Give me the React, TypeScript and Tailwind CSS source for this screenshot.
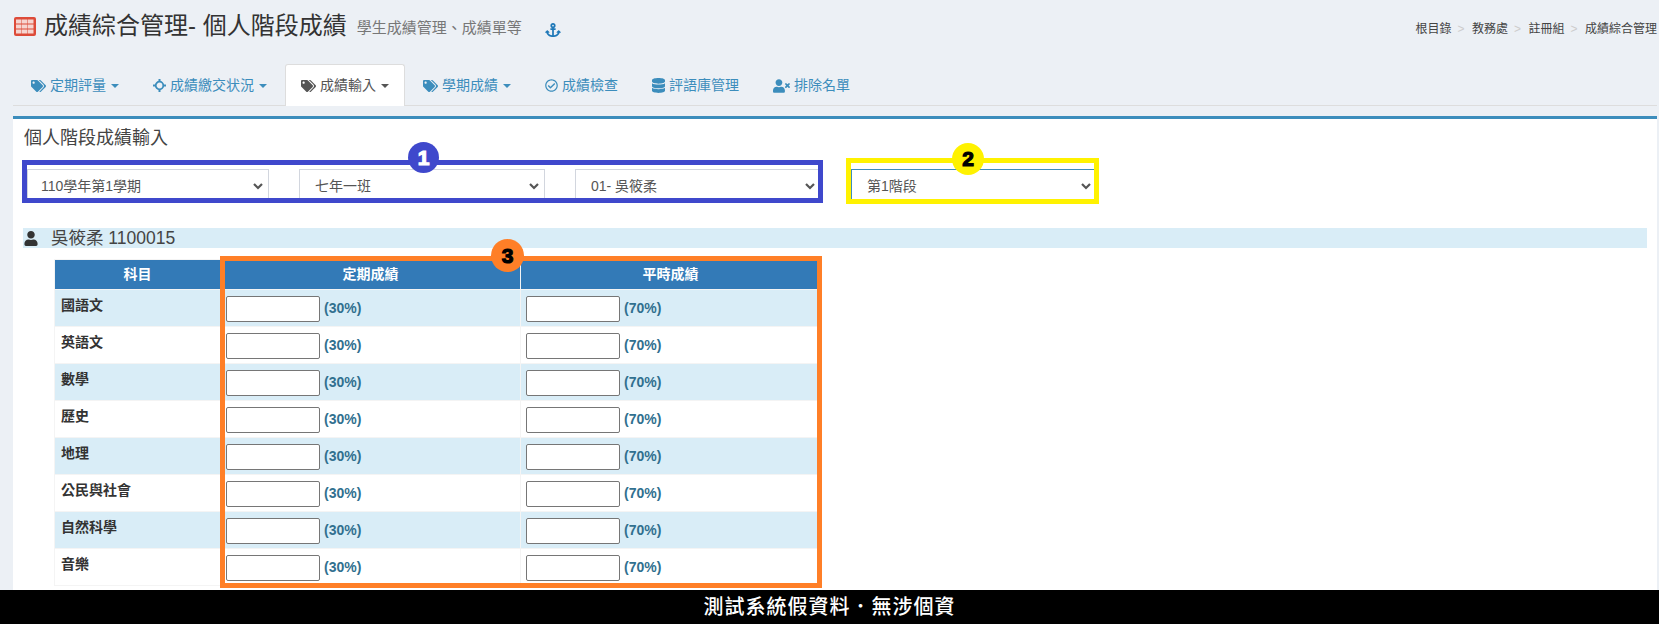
import React from "react";
import { FaTags, FaRegCheckCircle, FaDatabase, FaUserTimes, FaAnchor, FaUser } from "react-icons/fa";

const font = { fontFamily: '"Liberation Sans", "Noto Sans CJK TC", sans-serif' };

function Caret() {
  return <span className="ml-[1px] inline-block w-0 h-0 border-x-4 border-x-transparent border-t-4 border-t-current align-middle" />;
}

function TableIcon() {
  return (
    <svg viewBox="0 0 22 19" className="w-[22px] h-[19px] ml-[1px]">
      <rect x="0" y="0" width="22" height="19" rx="2" fill="#dd4b39" />
      {[2, 8, 14].map((x) =>
        [2.5, 7.5, 12.5].map((y) => <rect key={`${x}-${y}`} x={x} y={y} width="5.5" height="4" fill="#f6d5d0" />)
      )}
    </svg>
  );
}

function CrosshairIcon() {
  return (
    <svg viewBox="0 0 13 13" className="w-[13px] h-[13px]" fill="none" stroke="currentColor">
      <circle cx="6.5" cy="6.5" r="3.8" strokeWidth="1.8" />
      <path d="M6.5 0v3M6.5 10v3M0 6.5h3M10 6.5h3" strokeWidth="2" />
    </svg>
  );
}

const tabs = [
  { label: "定期評量", icon: <FaTags className="w-[15px] h-[14px]" />, caret: true },
  { label: "成績繳交状況", icon: <CrosshairIcon />, caret: true },
  { label: "成績輸入", icon: <FaTags className="w-[15px] h-[14px]" />, caret: true, active: true },
  { label: "學期成績", icon: <FaTags className="w-[15px] h-[14px]" />, caret: true },
  { label: "成績檢查", icon: <FaRegCheckCircle className="w-[13px] h-[13px]" /> },
  { label: "評語庫管理", icon: <FaDatabase className="w-[13px] h-[15px]" /> },
  { label: "排除名單", icon: <FaUserTimes className="w-[17px] h-[14px]" /> },
];

const subjects = ["國語文", "英語文", "數學", "歷史", "地理", "公民與社會", "自然科學", "音樂"];

function Score({ pct }: { pct: string }) {
  return (
    <td className="border border-[#f4f4f4] pl-[5px] pt-[1px] align-middle">
      <div className="flex items-center gap-[4px]">
        <input className="w-[94px] h-[26px] bg-white border border-[#767676] rounded-[2px]" />
        <b className="text-[14px] text-[#31708f]">({pct})</b>
      </div>
    </td>
  );
}

function Picker({ value, className, focus, first }: { value: string; className: string; focus?: boolean; first?: boolean }) {
  return (
    <div className={`relative h-[34px] ${className}`}>
      <select
        defaultValue={value}
        className={`w-full h-full appearance-none bg-white border rounded-none pr-1 text-[14px] text-[#555] ${first ? "pl-[13px]" : "pl-[15px]"} ${
          focus ? "border-[#3c8dbc]" : "border-[#d2d6de]"
        }`}
      >
        <option>{value}</option>
      </select>
      <svg viewBox="0 0 10 7" className="absolute right-[6px] top-[14px] w-[10px] h-[7px] pointer-events-none" fill="none" stroke="#555" strokeWidth="2.2">
        <path d="M1 1l4 4 4-4" />
      </svg>
    </div>
  );
}

const stroke = "[-webkit-text-stroke:1.2px_currentColor]";

export default function App() {
  return (
    <div className="relative w-[1659px] h-[624px] overflow-hidden bg-[#ecf0f5] flex flex-col" style={font}>
      <div className="h-[590px] flex flex-col pl-[13px] pr-[2px] overflow-hidden">
        <div className="h-[64px] shrink-0 flex items-start justify-between">
          <div className="flex items-center h-[52px]">
            <TableIcon />
            <h1 className="ml-[8px] text-[24px] leading-[30px] text-[#333] whitespace-nowrap">成績綜合管理- 個人階段成績</h1>
            <span className="ml-[10px] mt-[4px] text-[15px] text-[#777] whitespace-nowrap">學生成績管理、成績單等</span>
            <FaAnchor className="ml-[23px] mt-[8px] w-[16px] h-[14px] text-[#1f78b8]" />
          </div>
          <div className="flex items-center h-[58px] text-[12px] text-[#444] whitespace-nowrap">
            {["根目錄", "教務處", "註冊組"].map((t) => (
              <React.Fragment key={t}>
                <span>{t}</span>
                <span className="w-[20.5px] pl-[6px] text-[#ccc]">&gt;</span>
              </React.Fragment>
            ))}
            <span>成績綜合管理</span>
          </div>
        </div>

        <div className="h-[42px] shrink-0 flex items-stretch border-b border-[#ddd] pl-[2px]">
          {tabs.map((t) => (
            <div
              key={t.label}
              className={`h-[42px] mr-[2px] px-[15px] flex items-center gap-[4px] text-[14px] whitespace-nowrap rounded-t-[3px] border border-b-0 ${
                t.active ? "bg-white text-[#555] border-[#ddd]" : "text-[#3c8dbc] border-transparent"
              }`}
            >
              {t.icon}
              <span>{t.label}</span>
              {t.caret && <Caret />}
            </div>
          ))}
        </div>

        <div className="mt-[10px] flex-1 bg-white border-t-[3px] border-[#3c8dbc] overflow-hidden">
          <h2 className="ml-[11px] mt-[7px] text-[18px] leading-[24px] text-[#444]">個人階段成績輸入</h2>
          <div className="mt-[19px] ml-[14px] flex">
            <Picker value="110學年第1學期" className="w-[242px]" first />
            <Picker value="七年一班" className="w-[246px] ml-[30px]" />
            <Picker value="01- 吳筱柔" className="w-[246px] ml-[30px]" />
            <Picker value="第1階段" className="w-[246px] ml-[30px]" focus />
          </div>
          <div className="mt-[25px] ml-[10px] mr-[10px] h-[20px] bg-[#d9edf7] flex items-center text-[17.5px] text-[#444]">
            <FaUser className="ml-[1px] w-[14px] h-[15px] text-[#333]" />
            <span className="ml-[13px]">吳筱柔 1100015</span>
          </div>
          <table className="mt-[11px] ml-[41px] w-[766px] table-fixed border-collapse text-[14px]">
            <colgroup>
              <col className="w-[166px]" />
              <col className="w-[300px]" />
              <col className="w-[300px]" />
            </colgroup>
            <thead>
              <tr className="h-[30px] bg-[#337ab7] text-white font-bold">
                <th className="border border-[#f4f4f4]">科目</th>
                <th className="border border-[#f4f4f4]">定期成績</th>
                <th className="border border-[#f4f4f4]">平時成績</th>
              </tr>
            </thead>
            <tbody>
              {subjects.map((s, i) => (
                <tr key={s} className={`h-[37px] ${i % 2 === 0 ? "bg-[#d9edf7]" : "bg-white"}`}>
                  <td className="border border-[#f4f4f4] align-top pl-[6px] pt-[5px] font-bold text-[#333]">{s}</td>
                  <Score pct="30%" />
                  <Score pct="70%" />
                </tr>
              ))}
            </tbody>
          </table>
        </div>
      </div>

      <div className="h-[34px] shrink-0 bg-black text-white flex items-center justify-center text-[20px] tracking-[1px] font-medium">
        測試系統假資料．無涉個資
      </div>

      <div className="absolute left-[22px] top-[160px] w-[801px] h-[43px] border-[5px] border-[#3f48cc]" />
      <div className="absolute left-[846px] top-[158px] w-[253px] h-[46px] border-[5px] border-[#fff200]" />
      <div className="absolute left-[220px] top-[256px] w-[602px] h-[332px] border-[5px] border-[#ff7f27]" />

      <div className={`absolute left-[408px] top-[142px] w-[31px] h-[31px] rounded-full bg-[#3f48cc] text-white flex items-center justify-center text-[21px] font-bold ${stroke}`}>1</div>
      <div className={`absolute left-[952px] top-[143px] w-[32px] h-[32px] rounded-full bg-[#fff200] text-black flex items-center justify-center text-[21px] font-bold ${stroke}`}>2</div>
      <div className={`absolute left-[491px] top-[239px] w-[33px] h-[33px] rounded-full bg-[#ff7f27] text-black flex items-center justify-center text-[21px] font-bold ${stroke}`}>3</div>
    </div>
  );
}
